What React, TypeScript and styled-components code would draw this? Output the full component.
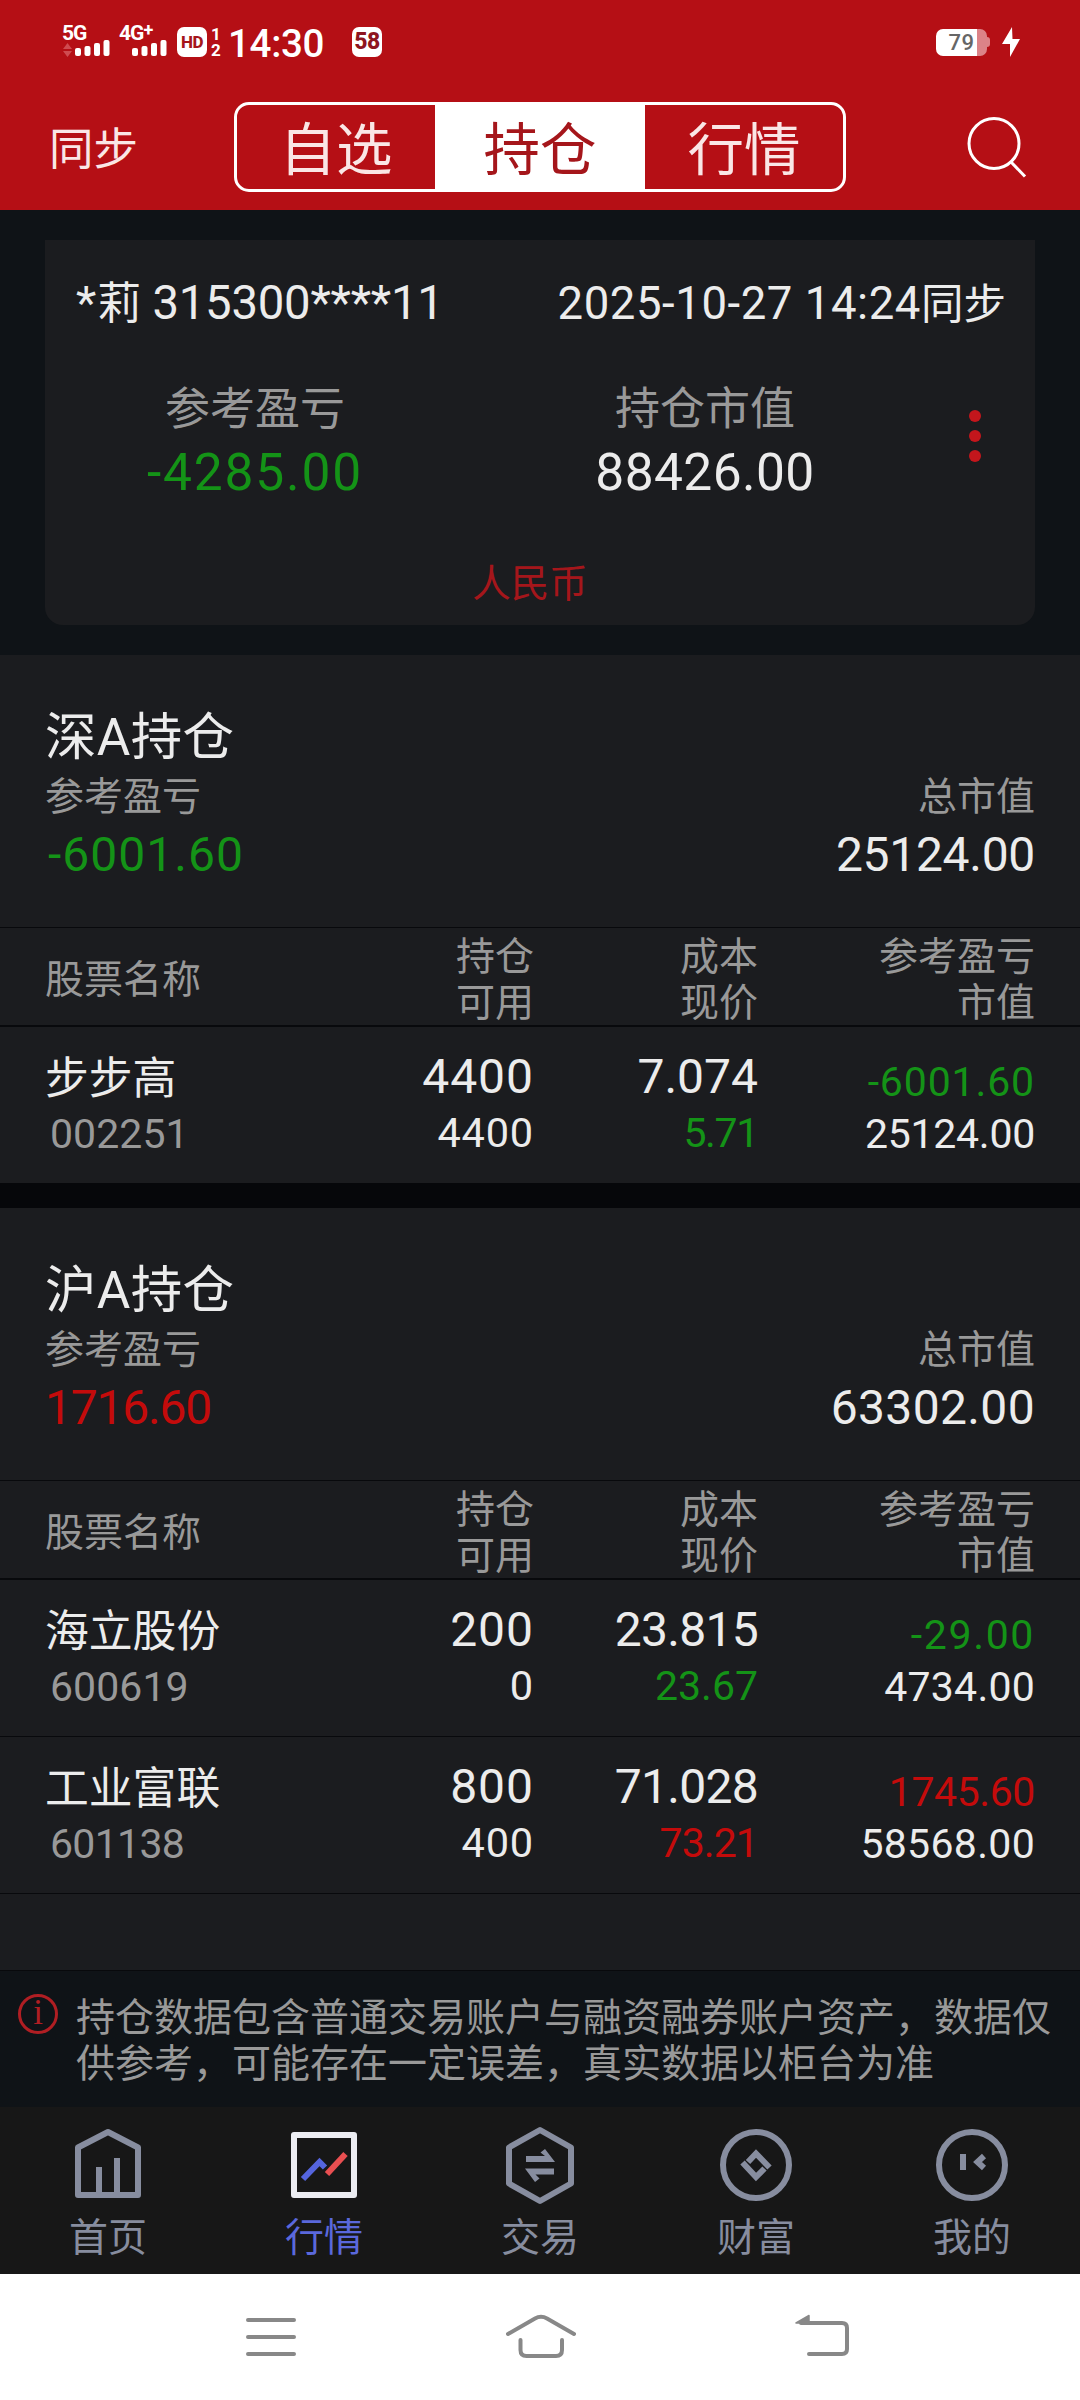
import React from "react";
import styled, { createGlobalStyle } from "styled-components";

const GlobalStyle = createGlobalStyle`
  * { box-sizing: border-box; }
  html, body { margin: 0; padding: 0; background: #0f1317; }
  body {
    width: 1080px;
    font-family: Roboto, "Noto Sans CJK SC", sans-serif;
    color: #ececec;
  }
  svg { display: block; flex: none; }
`;

const colors = {
  brand: "#b50f15",
  page: "#0f1317",
  panel: "#1b1c1f",
  line: "#08090c",
  muted: "#999999",
  text: "#ececec",
  up: "#c40b0b",
  down: "#149317",
  tab: "#878d9f",
  active: "#5a68dc",
};

type Tone = "text" | "up" | "down" | "muted";

const tracking = (text: string) => {
  const count = (ch: string) => text.split(ch).length - 1;
  const minus = text.startsWith("-") ? 0.17 : 0;
  const extra = 0.02 * text.length - 0.11 * count("1") - 0.1 * count(".") + 0.05 * count("-") + minus;
  return extra / text.length;
};

const Figure = styled.span<{ $size: number; $tone: Tone; $track: number }>`
  font-size: ${(p) => p.$size}px;
  color: ${(p) => colors[p.$tone]};
  letter-spacing: ${(p) => p.$track}em;
  white-space: pre;
`;

const Num = ({ children, size = 48, tone = "text" as Tone }: { children: string; size?: number; tone?: Tone }) => (
  <Figure $size={size} $tone={tone} $track={tracking(children)}>
    {children}
  </Figure>
);

const toneOf = (value: string): Tone => (value.startsWith("-") ? "down" : "up");

const Screen = styled.div`
  width: 1080px;
  height: 2400px;
  display: flex;
  flex-direction: column;
  overflow: hidden;
  background: ${colors.page};
`;

/* ---------- header ---------- */

const Header = styled.header`
  height: 210px;
  flex: none;
  background: ${colors.brand};
`;

const StatusBar = styled.div`
  height: 84px;
  padding: 0 60px 0 62px;
  display: flex;
  align-items: center;
  color: #fff;
`;

const Signal = styled.div<{ $width: number }>`
  width: ${(p) => p.$width}px;
  height: 34px;
  display: flex;
  flex-direction: column;
`;

const Network = styled.span`
  height: 15px;
  font-size: 21px;
  line-height: 17px;
  font-weight: 700;
  letter-spacing: -1px;
`;

const Plus = styled.sup`
  font-size: 18px;
  line-height: 0;
  vertical-align: 4px;
`;

const Chip = styled.span<{ $color: string; $size: number }>`
  width: 30px;
  height: 30px;
  border-radius: 7px;
  background: #fff;
  color: ${(p) => p.$color};
  display: flex;
  align-items: center;
  justify-content: center;
  font-size: ${(p) => p.$size}px;
  line-height: 30px;
  font-weight: 800;
  letter-spacing: -0.5px;
`;

const Sims = styled.span`
  width: 16px;
  margin-left: 1px;
  display: flex;
  flex-direction: column;
  align-items: center;
  font-size: 17px;
  line-height: 16px;
  font-weight: 700;
`;

const Clock = styled.span`
  margin-left: 4px;
  width: 124px;
  font-size: 38.5px;
  line-height: 50px;
  font-weight: 500;
  letter-spacing: -0.3px;
  padding-top: 3px;
`;

const Battery = styled.span`
  margin-left: auto;
  width: 51px;
  height: 27px;
  border-radius: 7px;
  background: linear-gradient(90deg, #fff 41px, #dc8388 41px);
  color: #666;
  font-size: 22px;
  font-weight: 500;
  line-height: 28px;
  text-align: center;
  letter-spacing: 0.4px;
`;

const BatteryNub = styled.span`
  width: 3px;
  height: 10px;
  margin-right: 12px;
  border-radius: 0 3px 3px 0;
  background: #dc8388;
`;

const Toolbar = styled.div`
  height: 126px;
  padding: 0 52px 0 48px;
  display: flex;
  align-items: center;
`;

const Sync = styled.button`
  width: 186px;
  padding: 6px 0 0 1px;
  border: 0;
  background: none;
  color: #fae6e6;
  font: inherit;
  font-size: 44.5px;
  line-height: 60px;
  text-align: left;
`;

const Segments = styled.div`
  width: 612px;
  height: 90px;
  border: 3px solid #fff;
  border-radius: 15px;
  overflow: hidden;
  display: grid;
  grid-template-columns: 198px 210px 1fr;
`;

const Segment = styled.button<{ $on?: boolean }>`
  padding: 7px 0 0;
  border: 0;
  background: ${(p) => (p.$on ? "#fff" : "transparent")};
  color: ${(p) => (p.$on ? "#a5161b" : "#fae6e6")};
  font: inherit;
  font-size: 56.5px;
  line-height: 70px;
`;

const SearchIcon = styled.svg`
  margin-left: auto;
`;

/* ---------- account summary ---------- */

const Summary = styled.section`
  height: 445px;
  flex: none;
  padding: 30px 45px;
`;

const Card = styled.div`
  height: 385px;
  padding-top: 33px;
  border-radius: 0 0 18px 18px;
  background: ${colors.panel};
`;

const Account = styled.div`
  height: 60px;
  padding: 0 29px 0 31px;
  display: flex;
  justify-content: space-between;
  align-items: baseline;
  line-height: 60px;
`;

const Han = styled.span<{ $size: number }>`
  font-size: ${(p) => p.$size}px;
`;

const Totals = styled.div`
  margin-top: 49px;
  display: grid;
  grid-template-columns: 420px 480px 60px;
`;

const Total = styled.div`
  display: flex;
  flex-direction: column;
  align-items: center;
  gap: 3px;
  line-height: 64px;
`;

const TotalLabel = styled.span`
  font-size: 45px;
  line-height: 56px;
  color: ${colors.muted};
`;

const More = styled.div`
  display: flex;
  flex-direction: column;
  align-items: center;
  gap: 8px;
  padding-top: 28px;
`;

const Dot = styled.i`
  width: 12px;
  height: 12px;
  border-radius: 50%;
  background: #c4161c;
`;

const Currency = styled.div`
  margin-top: 54px;
  padding-right: 20px;
  text-align: center;
  font-size: 38.5px;
  line-height: 50px;
  color: #a5161b;
`;

/* ---------- holdings ---------- */

const Market = styled.section<{ $grow?: boolean }>`
  flex: ${(p) => (p.$grow ? "1 1 0" : "none")};
  background: ${colors.panel};
  border-bottom: ${(p) => (p.$grow ? `1px solid ${colors.line}` : "0")};
  & + & { border-top: 25px solid #06070a; }
`;

const MarketHead = styled.div`
  height: 273px;
  padding: 53px 45px 0 45px;
  border-bottom: 1px solid ${colors.line};
`;

const MarketTitle = styled.h2`
  margin: 0 0 9px;
  font-size: 51.5px;
  font-weight: 400;
  line-height: 60px;
  letter-spacing: 0.3px;
`;

const Between = styled.div<{ $line: number }>`
  display: flex;
  justify-content: space-between;
  font-size: 39px;
  line-height: ${(p) => p.$line}px;
  color: ${colors.muted};
  & + & { margin-top: 9px; }
`;

const SectionProfit = styled.span<{ $indent: boolean }>`
  padding-left: ${(p) => (p.$indent ? 3 : 0)}px;
`;

const columns = `
  display: grid;
  grid-template-columns: 255px 234px 224px 277px;
  padding: 0 45px;
`;

const TableHead = styled.div`
  ${columns}
  height: 99px;
  border-bottom: 2px solid ${colors.line};
  color: ${colors.muted};
  font-size: 39px;
  line-height: 46px;
`;

const HeadName = styled.div`
  padding-top: 29px;
`;

const HeadCell = styled.div`
  padding-top: 6px;
  display: flex;
  flex-direction: column;
  align-items: flex-end;
`;

const Row = styled.div<{ $last?: boolean }>`
  ${columns}
  height: ${(p) => (p.$last ? 156 : 157)}px;
  border-bottom: ${(p) => (p.$last ? "0" : `1px solid ${colors.line}`)};
`;

const NameCell = styled.div`
  padding-top: 25px;
  display: flex;
  flex-direction: column;
  line-height: 55px;
`;

const StockName = styled.span`
  font-size: 43.8px;
  white-space: nowrap;
`;

const Code = styled.span`
  padding-left: 5px;
`;

const Cell = styled.div<{ $top: number; $gap: number }>`
  padding-top: ${(p) => p.$top}px;
  display: flex;
  flex-direction: column;
  align-items: flex-end;
  gap: ${(p) => p.$gap}px;
  line-height: 48px;
`;

/* ---------- notice and tabs ---------- */

const Notice = styled.div`
  height: 136px;
  flex: none;
  padding: 24px 24px 0 17px;
  display: flex;
  gap: 18px;
  font-size: 39px;
  line-height: 46px;
  color: ${colors.muted};
`;

const InfoMark = styled.span`
  flex: none;
  width: 40px;
  height: 40px;
  margin: -1px 0 0 1px;
  border: 3px solid #b01e23;
  border-radius: 50%;
  color: #b01e23;
  font-family: "Liberation Serif", serif;
  font-size: 35px;
  line-height: 32px;
  text-align: center;
`;

const NoticeText = styled.p`
  margin: 0;
  width: 990px;
`;

const Tabs = styled.nav`
  height: 167px;
  flex: none;
  padding-top: 14px;
  display: grid;
  grid-template-columns: repeat(5, 1fr);
  background: #171717;
`;

const Tab = styled.div<{ $active?: boolean }>`
  display: flex;
  flex-direction: column;
  align-items: center;
  gap: 8px;
  font-size: 39px;
  line-height: 50px;
  color: ${(p) => (p.$active ? colors.active : colors.tab)};
`;

const SystemBar = styled.div`
  height: 126px;
  flex: none;
  padding: 35px 0 0 236px;
  display: flex;
  gap: 200px;
  background: #fff;
`;

/* ---------- data ---------- */

interface Holding {
  name: string;
  code: string;
  held: string;
  usable: string;
  cost: string;
  price: string;
  priceTone: Tone;
  profit: string;
  value: string;
}

interface MarketData {
  title: string;
  profit: string;
  value: string;
  holdings: Holding[];
}

const markets: MarketData[] = [
  {
    title: "深A持仓",
    profit: "-6001.60",
    value: "25124.00",
    holdings: [
      { name: "步步高", code: "002251", held: "4400", usable: "4400", cost: "7.074", price: "5.71", priceTone: "down", profit: "-6001.60", value: "25124.00" },
    ],
  },
  {
    title: "沪A持仓",
    profit: "1716.60",
    value: "63302.00",
    holdings: [
      { name: "海立股份", code: "600619", held: "200", usable: "0", cost: "23.815", price: "23.67", priceTone: "down", profit: "-29.00", value: "4734.00" },
      { name: "工业富联", code: "601138", held: "800", usable: "400", cost: "71.028", price: "73.21", priceTone: "up", profit: "1745.60", value: "58568.00" },
    ],
  },
];

/* ---------- icons ---------- */

const Bars = ({ arrows }: { arrows?: boolean }) => (
  <svg width="49" height="19" viewBox="0 0 49 19">
    {arrows && <path d="M1 9 L5.5 3 L10 9Z M1 11 L5.5 17 L10 11Z" fill="#cf4b50" />}
    <g fill="#fff">
      <rect x="13" y="8" width="6" height="8" rx="2" />
      <rect x="22.5" y="6" width="6" height="10" rx="2" />
      <rect x="32" y="3" width="6" height="13" rx="2" />
      <rect x="41.5" y="0" width="6" height="16" rx="2" />
    </g>
  </svg>
);

const TabIcon = ({ children }: { children: React.ReactNode }) => (
  <svg width="80" height="84" viewBox="0 0 80 84" fill="none" stroke={colors.tab} strokeWidth="6">
    {children}
  </svg>
);

const HomeIcon = () => (
  <TabIcon>
    <path d="M10 26.5 L40 11 L70 26.5 V74 H10Z" strokeLinejoin="round" />
    <path d="M31 74 V46 M49 74 V37" />
  </TabIcon>
);

const QuotesIcon = () => (
  <TabIcon>
    <rect x="10" y="14" width="60" height="60" stroke="#ebecf1" strokeLinejoin="round" />
    <path d="M19 58 L35.5 41 L41 46.5" stroke="#5565de" />
    <path d="M43 53 L61.5 33" stroke="#e94f51" />
  </TabIcon>
);

const TradeIcon = () => (
  <TabIcon>
    <path d="M40 9 L71 26.5 V62.5 L40 80 L9 62.5 V26.5Z" strokeLinejoin="round" />
    <path
      d="M26 35 H45 L40.5 31.5 L45 28 L55 41 H26Z M54 53.500 H35.500 L39.500 57.500 L35 61 L25 47.500 H54Z"
      fill={colors.tab}
      stroke="none"
    />
  </TabIcon>
);

const WealthIcon = () => (
  <TabIcon>
    <circle cx="40" cy="44" r="33" />
    <path d="M32 41 L40 32.500 L53.500 46.500 M26.500 41.500 L40 56 L48.500 47.500" />
  </TabIcon>
);

const MineIcon = () => (
  <TabIcon>
    <circle cx="40" cy="44" r="33" />
    <path d="M31 33 V49 M52 35 L45.500 41 L52 47" />
  </TabIcon>
);

const tabs = [
  { label: "首页", Icon: HomeIcon },
  { label: "行情", Icon: QuotesIcon, active: true },
  { label: "交易", Icon: TradeIcon },
  { label: "财富", Icon: WealthIcon },
  { label: "我的", Icon: MineIcon },
];

/* ---------- page ---------- */

const MarketPanel = ({ data, grow }: { data: MarketData; grow: boolean }) => (
  <Market $grow={grow}>
    <MarketHead>
      <MarketTitle>{data.title}</MarketTitle>
      <Between $line={41}>
        <span>参考盈亏</span>
        <span>总市值</span>
      </Between>
      <Between $line={56}>
        <SectionProfit $indent={toneOf(data.profit) === "down"}>
          <Num tone={toneOf(data.profit)}>{data.profit}</Num>
        </SectionProfit>
        <Num>{data.value}</Num>
      </Between>
    </MarketHead>
    <TableHead>
      <HeadName>股票名称</HeadName>
      <HeadCell><span>持仓</span><span>可用</span></HeadCell>
      <HeadCell><span>成本</span><span>现价</span></HeadCell>
      <HeadCell><span>参考盈亏</span><span>市值</span></HeadCell>
    </TableHead>
    {data.holdings.map((h) => (
      <Row key={h.code} $last={!grow}>
        <NameCell>
          <StockName>{h.name}</StockName>
          <Code><Num size={41} tone="muted">{h.code}</Num></Code>
        </NameCell>
        <Cell $top={26} $gap={8}>
          <Num>{h.held}</Num>
          <Num size={41.5}>{h.usable}</Num>
        </Cell>
        <Cell $top={26} $gap={8}>
          <Num>{h.cost}</Num>
          <Num size={41}  tone={h.priceTone}>{h.price}</Num>
        </Cell>
        <Cell $top={31} $gap={4}>
          <Num size={41} tone={toneOf(h.profit)}>{h.profit}</Num>
          <Num size={41}>{h.value}</Num>
        </Cell>
      </Row>
    ))}
  </Market>
);

export default function App() {
  return (
    <Screen>
      <GlobalStyle />
      <Header>
        <StatusBar>
          <Signal $width={57}>
            <Network>5G</Network>
            <Bars arrows />
          </Signal>
          <Signal $width={58}>
            <Network>4G<Plus>+</Plus></Network>
            <Bars />
          </Signal>
          <Chip $color="#a5161b" $size={17}>HD</Chip>
          <Sims><span>1</span><span>2</span></Sims>
          <Clock>14:30</Clock>
          <Chip $color="#8e1520" $size={23}>58</Chip>
          <Battery>79</Battery>
          <BatteryNub />
          <svg width="18" height="30" viewBox="0 0 18 30">
            <path d="M10 0 L0 17 H8 L8 30 L18 12 H10.500Z" fill="#fff" />
          </svg>
        </StatusBar>
        <Toolbar>
          <Sync>同步</Sync>
          <Segments>
            <Segment>自选</Segment>
            <Segment $on>持仓</Segment>
            <Segment>行情</Segment>
          </Segments>
          <SearchIcon width="62" height="62" viewBox="0 0 62 62" fill="none" stroke="#fff" strokeWidth="3">
            <circle cx="28" cy="27.500" r="25" />
            <path d="M45 46 L59 60.500" />
          </SearchIcon>
        </Toolbar>
      </Header>

      <Summary>
        <Card>
          <Account>
            <span>
              <Num size={47}>*</Num>
              <Han $size={43.8}>莉</Han>
              <Num size={47.3}>{" 315300****11"}</Num>
            </span>
            <span>
              <Num size={45.5}>2025-10-27 14:24</Num>
              <Han $size={42.5}>同步</Han>
            </span>
          </Account>
          <Totals>
            <Total>
              <TotalLabel>参考盈亏</TotalLabel>
              <Num size={51.5} tone="down">-4285.00</Num>
            </Total>
            <Total>
              <TotalLabel>持仓市值</TotalLabel>
              <Num size={51.5}>88426.00</Num>
            </Total>
            <More><Dot /><Dot /><Dot /></More>
          </Totals>
          <Currency>人民币</Currency>
        </Card>
      </Summary>

      {markets.map((m, i) => (
        <MarketPanel key={m.title} data={m} grow={i === markets.length - 1} />
      ))}

      <Notice>
        <InfoMark>i</InfoMark>
        <NoticeText>
          持仓数据包含普通交易账户与融资融券账户资产，数据仅供参考，可能存在一定误差，真实数据以柜台为准
        </NoticeText>
      </Notice>

      <Tabs>
        {tabs.map(({ label, Icon, active }) => (
          <Tab key={label} $active={active}>
            <Icon />
            <span>{label}</span>
          </Tab>
        ))}
      </Tabs>

      <SystemBar>
        <svg width="70" height="56" viewBox="0 0 70 56" fill="none" stroke="#888" strokeWidth="4" strokeLinecap="round">
          <path d="M12 11 H58 M12 28 H58 M12 45 H58" />
        </svg>
        <svg width="70" height="56" viewBox="0 0 70 56" fill="none" stroke="#888" strokeWidth="4" strokeLinecap="round">
          <path d="M2 25 L29 9.500 Q35 6 41 9.500 L68 25 M14.500 31 V41 Q14.500 47 20.500 47 H50 Q56 47 56 41 V31" />
        </svg>
        <svg width="76" height="56" viewBox="0 0 76 56" fill="none" stroke="#888" strokeWidth="4" strokeLinecap="round">
          <path d="M25 14 H66 Q71 14 71 19 V40 Q71 45 66 45 H33" />
          <path d="M20 14 L33 6.500 V14Z" fill="#888" stroke="#888" strokeWidth="1.500" strokeLinejoin="round" />
        </svg>
      </SystemBar>
    </Screen>
  );
}
